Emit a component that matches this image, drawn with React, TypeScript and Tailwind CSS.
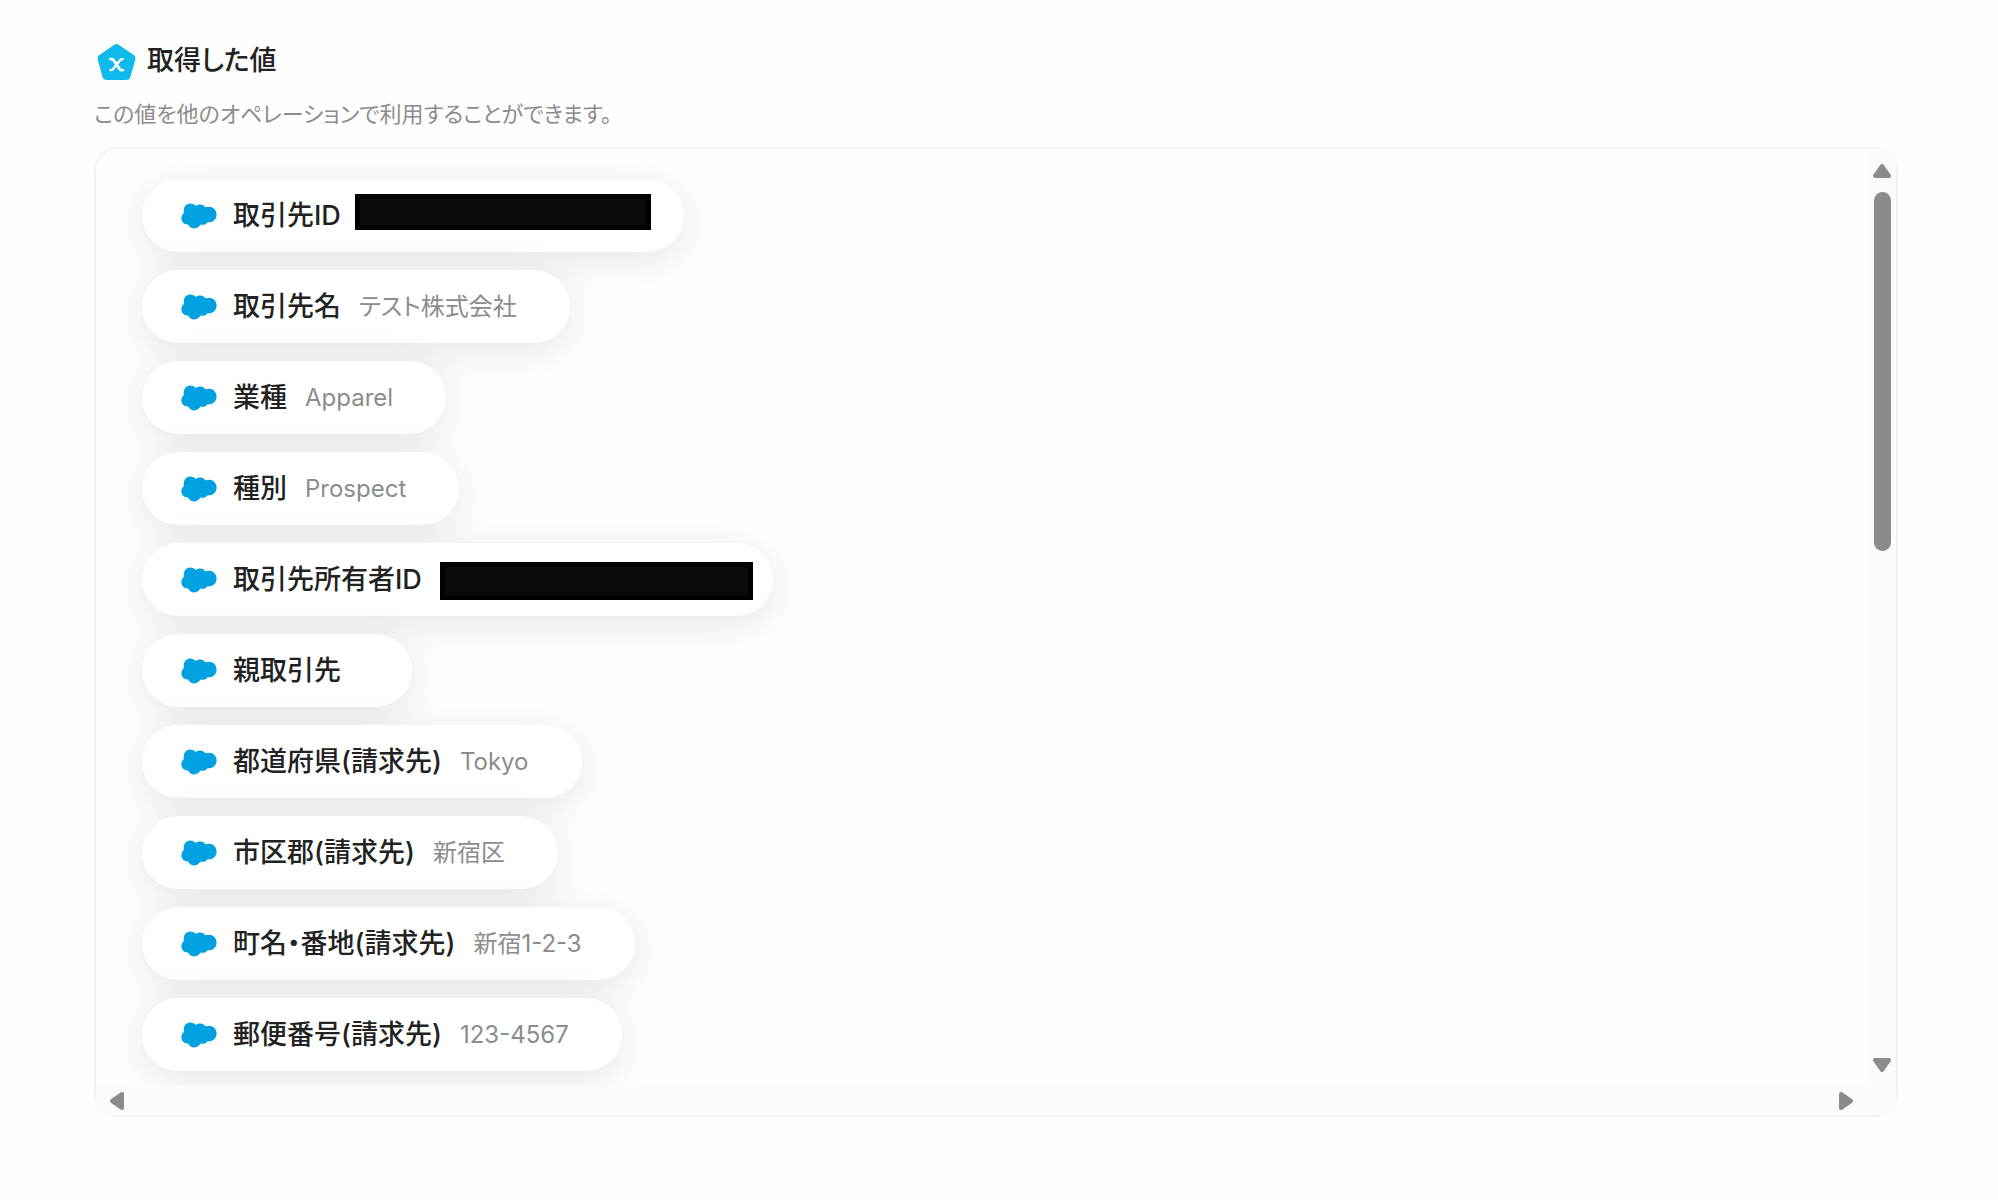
type Field = {
  label: string;
  value?: string;
  hidden?: "account" | "owner";
};

const fields: Field[] = [
  { label: "取引先ID", hidden: "account" },
  { label: "取引先名", value: "テスト株式会社" },
  { label: "業種", value: "Apparel" },
  { label: "種別", value: "Prospect" },
  { label: "取引先所有者ID", hidden: "owner" },
  { label: "親取引先" },
  { label: "都道府県(請求先)", value: "Tokyo" },
  { label: "市区郡(請求先)", value: "新宿区" },
  { label: "町名・番地(請求先)", value: "新宿1-2-3" },
  { label: "郵便番号(請求先)", value: "123-4567" },
];

function VariableIcon() {
  return (
    <svg viewBox="0 0 40 38" className="h-[38px] w-10 shrink-0" aria-hidden="true">
      <path
        d="M17.3 1.7a4 4 0 0 1 4.4 0l15 10.3a4 4 0 0 1 1.6 4.500l-4.800 17.200a4.500 4.500 0 0 1-4.300 3.300H9.800a4.500 4.500 0 0 1-4.300-3.300L.7 16.500A4 4 0 0 1 2.300 12z"
        fill="#10b9ec"
      />
      <path
        d="M13.600 16.200h1.400q1 0 1.600.9l6.200 9.100q.6.900 1.600.9h1.400"
        fill="none"
        stroke="#fff"
        strokeWidth="2.800"
        strokeLinecap="round"
      />
      <path
        d="M25.800 16.200h-.8q-1 0-1.700.8l-7.400 9.200q-.7.900-1.700.9h-.8"
        fill="none"
        stroke="#fff"
        strokeWidth="2.300"
        strokeLinecap="round"
      />
    </svg>
  );
}

function CloudIcon() {
  return (
    <svg viewBox="0 0 36 26" className="h-[26px] w-9 shrink-0" fill="#00a1e0" aria-hidden="true">
      <path d="M2.9 10C2 4 5 .4 9.200.4c2.300 0 4.300 1 5.600 2.500 1.200-1 2.800-1.500 4.500-1.500 2.200 0 4 1.100 5.100 2.900 1.100-.4 2.300-.6 3.600-.6 4.300 0 7.600 3.500 7.600 7.800 0 4.400-3.300 7.800-7.600 7.800l-1.500-.1c-1.200 2.100-4 3.100-7.200 2.400-1 2.400-3.300 3.800-5.900 3.800-2.800 0-5.100-1.600-6.200-4C3.400 21.800.4 19 .4 15.500c0-2.300.9-4.300 2.500-5.500z" />
    </svg>
  );
}

function HiddenValue({ kind }: { kind: "account" | "owner" }) {
  if (kind === "account") {
    return (
      <span className="relative h-9 w-[272px]">
        <span className="absolute -left-1 -top-1 h-9 w-[296px] border-[5px] border-black bg-[#0a0a0a]" />
      </span>
    );
  }
  return (
    <span className="relative h-9 w-[280px]">
      <span className="absolute left-0 top-0 h-[38px] w-[313px] border-[5px] border-black bg-[#0a0a0a]" />
    </span>
  );
}

function FieldPill({ field }: { field: Field }) {
  return (
    <li className="flex h-[73px] items-center rounded-full bg-white pl-[39px] pr-[53px] shadow-[0_8px_40px_rgba(0,0,0,0.1)]">
      <CloudIcon />
      <span className="ml-4 mr-[18px] whitespace-nowrap text-[27px] leading-9 font-medium text-[#222]">
        {field.label}
      </span>
      {field.value && (
        <span className="whitespace-nowrap text-[24px] leading-9 text-[#8c8c8c]">{field.value}</span>
      )}
      {field.hidden && <HiddenValue kind={field.hidden} />}
    </li>
  );
}

function Arrow({ className }: { className: string }) {
  return (
    <svg viewBox="0 0 20 16" className={`h-4 w-5 ${className}`} aria-hidden="true">
      <path
        d="M10 3 17 13H3z"
        fill="#8b8b8b"
        stroke="#8b8b8b"
        strokeWidth="4"
        strokeLinejoin="round"
      />
    </svg>
  );
}

export default function App() {
  return (
    <main className="min-h-screen bg-[#fefefe] pt-[43px] pr-[100px] pb-20 pl-[94px] font-['Inter','Noto_Sans_CJK_JP',sans-serif] [font-feature-settings:'palt']">
      <header>
        <div className="flex items-start gap-2.5 pl-[3px]">
          <VariableIcon />
          <h1 className="text-[27px] leading-9 font-medium text-[#222]">取得した値</h1>
        </div>
        <p className="mt-[15px] text-[22px] leading-9 text-[#8c8c8c]">
          この値を他のオペレーションで利用することができます。
        </p>
      </header>

      <section className="mt-[15px] grid grid-cols-[1fr_28px] rounded-[24px] border-2 border-[#f2f2f2]">
        <div className="overflow-hidden">
          <ul className="flex flex-col items-start gap-[18px] pt-[30px] pb-[15px] pl-[46px]">
            {fields.map((field) => (
              <FieldPill key={field.label} field={field} />
            ))}
          </ul>
        </div>

        <div className="flex flex-col items-center bg-[#fbfbfb] pt-[14px] pb-[13px]">
          <button type="button" aria-label="上へスクロール">
            <Arrow className="block" />
          </button>
          <div className="mt-[13px] flex w-[17px] flex-1 flex-col">
            <div className="h-[359px] rounded-full bg-[#8b8b8b]" />
          </div>
          <button type="button" aria-label="下へスクロール">
            <Arrow className="rotate-180" />
          </button>
        </div>

        <div className="flex h-[29px] items-center justify-between bg-[#fbfbfb] pr-3 pl-[11px]">
          <button type="button" aria-label="左へスクロール">
            <Arrow className="-rotate-90" />
          </button>
          <button type="button" aria-label="右へスクロール">
            <Arrow className="rotate-90" />
          </button>
        </div>
        <div className="bg-[#fbfbfb]" />
      </section>
    </main>
  );
}
